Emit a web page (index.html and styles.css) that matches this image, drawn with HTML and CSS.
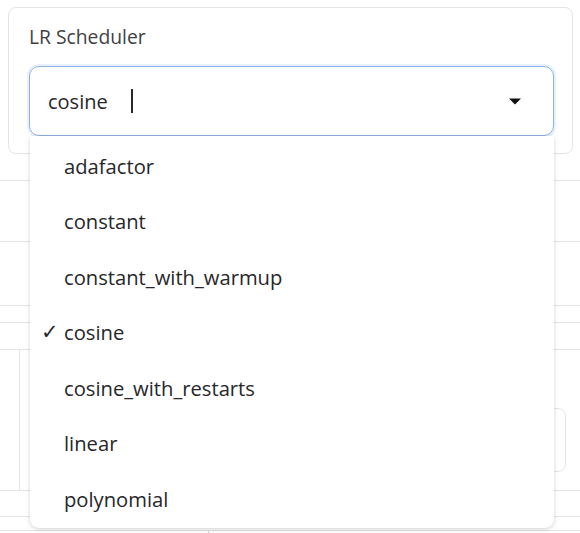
FILE: index.html
```html
<!DOCTYPE html>
<html>
<head>
<meta charset="utf-8">
<link rel="stylesheet" href="styles.css">
</head>
<body>
<div class="page">
  <div class="card">
    <div class="label">LR Scheduler</div>
    <div class="field">
      <div class="input">
        <span class="value">cosine</span>
        <span class="caret"></span>
        <svg class="arrow" width="14" height="8" viewBox="0 0 14 8"><path d="M1 1.5 H13 L7 7.5 Z" fill="#111"/></svg>
      </div>
      <ul class="menu">
        <li class="opt">adafactor</li>
        <li class="opt">constant</li>
        <li class="opt">constant_with_warmup</li>
        <li class="opt selected"><span class="check">✓</span>cosine</li>
        <li class="opt">cosine_with_restarts</li>
        <li class="opt">linear</li>
        <li class="opt">polynomial</li>
      </ul>
    </div>
  </div>
  <div class="rows">
    <div class="row r1"></div>
    <div class="row r2"></div>
    <div class="row r3"></div>
    <div class="row r4"></div>
    <div class="row r5"></div>
    <div class="row r6">
      <div class="col-left"></div>
      <div class="col-main"><div class="box"></div></div>
    </div>
    <div class="row r7"></div>
    <div class="row r8"></div>
    <div class="tickrow"><div class="tick"></div></div>
  </div>
</div>
</body>
</html>
```
FILE: styles.css
```css
* { box-sizing: border-box; }
html, body { margin: 0; padding: 0; background: #fff; }
body {
  font-family: "Open Sans", "Noto Sans", sans-serif;
  color: #27272a;
  width: 580px;
  height: 533px;
  overflow: hidden;
}
.page { padding-top: 7px; }
.card {
  margin: 0 7px 0 8px;
  height: 147px;
  border: 1px solid #e4e4e7;
  border-radius: 8px;
  padding: 17px 18px 0 20px;
}
.label {
  font-size: 19.3px;
  color: #3f3f46;
  line-height: 24px;
}
.field { position: relative; margin-top: 17px; }
.input {
  height: 70px;
  border: 1.5px solid #8fb0e2;
  border-radius: 10px;
  box-shadow: 0 0 0 2px #e8f0fc;
  display: flex;
  align-items: center;
  padding-left: 18px;
  padding-right: 31px;
}
.value { font-size: 20px; color: #27272a; }
.caret {
  width: 2px;
  height: 24px;
  background: #27272a;
  margin-left: 23px;
}
.arrow { margin-left: auto; }
.menu {
  position: absolute;
  left: 1px;
  right: 0;
  top: 70px;
  margin: 0;
  padding: 2px 0 1px;
  list-style: none;
  background: #fff;
  border-radius: 0 0 9px 9px;
  box-shadow: 0 1px 4px rgba(0,0,0,0.12), 0 2px 6px rgba(0,0,0,0.06);
  z-index: 5;
}
.opt {
  height: 55.5px;
  display: flex;
  align-items: center;
  padding-left: 34px;
  font-size: 20.2px;
  position: relative;
}
.check {
  position: absolute;
  left: 11px;
  font-family: "DejaVu Sans", sans-serif;
  font-size: 21px;
}
.rows { position: relative; }
.row { border-bottom: 1px solid #e4e4e7; }
.r1 { height: 27px; }
.r2 { height: 61px; }
.r3 { height: 64px; }
.r4 { height: 17px; }
.r5 { height: 27px; }
.r6 { height: 141px; display: flex; }
.col-left { width: 20px; border-right: 1px solid #e4e4e7; }
.col-main { flex: 1; display: flex; justify-content: flex-end; padding-top: 58px; padding-right: 14px; }
.box { width: 80px; height: 64px; border: 1px solid #e4e4e7; border-radius: 8px; }
.r7 { height: 26px; }
.r8 { height: 14px; }
.tickrow { padding-left: 208px; }
.tick { width: 1px; height: 4px; background: #d4d4d8; }
```
